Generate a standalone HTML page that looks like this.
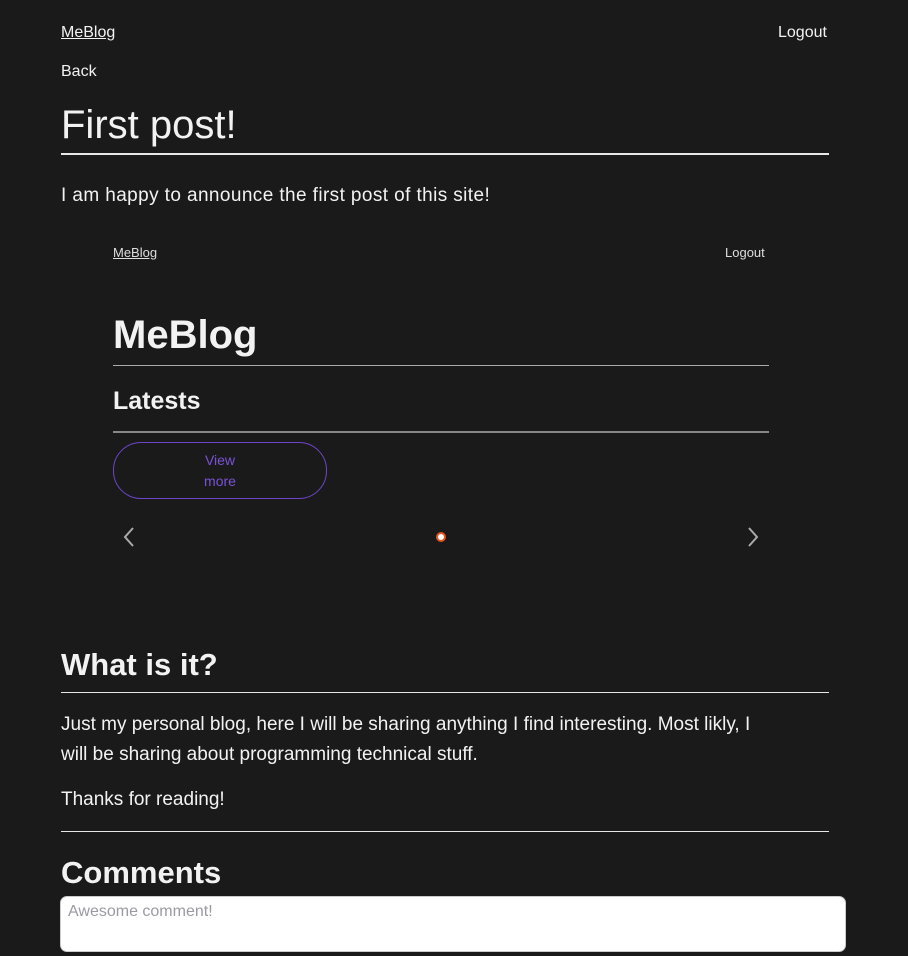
<!DOCTYPE html>
<html><head><meta charset="utf-8"><style>
body{margin:0;width:908px;height:956px;background:#1a1a1a;color:#f2f2f2;font-family:"Liberation Sans",sans-serif;position:relative;overflow:hidden}
.a{position:absolute;white-space:nowrap}
.hr{position:absolute;height:1px;background:#e8e8e8}
</style></head><body>
<div class="a" style="left:61px;top:24px;font-size:16px;text-decoration:underline">MeBlog</div>
<div class="a" style="left:778px;top:24px;font-size:16px">Logout</div>
<div class="a" style="left:61px;top:63px;font-size:16px">Back</div>
<div class="a" style="left:61px;top:103px;font-size:40px">First post!</div>
<div class="hr" style="left:61px;top:153px;width:768px;height:2px"></div>
<div class="a" style="left:61px;top:185px;font-size:19px;letter-spacing:0.4px">I am happy to announce the first post of this site!</div>

<div class="a" style="left:113px;top:245px;font-size:13px;text-decoration:underline;color:#ddd">MeBlog</div>
<div class="a" style="left:725px;top:245px;font-size:13px;color:#ddd">Logout</div>
<div class="a" style="left:113px;top:313px;font-size:40px;font-weight:bold">MeBlog</div>
<div class="hr" style="left:113px;top:365px;width:656px;background:#aaa"></div>
<div class="a" style="left:113px;top:387px;font-size:25px;font-weight:bold">Latests</div>
<div class="hr" style="left:113px;top:431px;width:656px;height:2px;background:#888"></div>
<div style="position:absolute;left:113px;top:442px;width:212px;height:55px;border:1px solid #6d45c8;border-radius:28px"></div>
<div class="a" style="left:113px;top:450px;width:214px;text-align:center;font-size:14px;line-height:21px;color:#7a52d6;white-space:normal">View<br>more</div>
<svg class="a" style="left:120px;top:526px" width="18" height="22"><path d="M13 2 L5 11 L13 20" stroke="#aaa" stroke-width="2" fill="none"/></svg>
<svg class="a" style="left:744px;top:526px" width="18" height="22"><path d="M5 2 L13 11 L5 20" stroke="#aaa" stroke-width="2" fill="none"/></svg>
<div style="position:absolute;left:436px;top:532px;width:6px;height:6px;border:2px solid #e8531c;border-radius:50%;background:#fff"></div>

<div class="a" style="left:61px;top:647px;font-size:31px;font-weight:bold">What is it?</div>
<div class="hr" style="left:61px;top:692px;width:768px"></div>
<div class="a" style="left:61px;top:710px;font-size:19px;line-height:30px">Just my personal blog, here I will be sharing anything I find interesting. Most likly, I<br>will be sharing about programming technical stuff.</div>
<div class="a" style="left:61px;top:789px;font-size:19px">Thanks for reading!</div>
<div class="hr" style="left:61px;top:831px;width:768px"></div>
<div class="a" style="left:61px;top:855px;font-size:31px;font-weight:bold">Comments</div>
<div style="position:absolute;left:60px;top:896px;width:784px;height:54px;background:#fff;border:1px solid #ccc;border-radius:7px"></div>
<div class="a" style="left:68px;top:903px;font-size:16px;color:#9a9aa4">Awesome comment!</div>
</body></html>
